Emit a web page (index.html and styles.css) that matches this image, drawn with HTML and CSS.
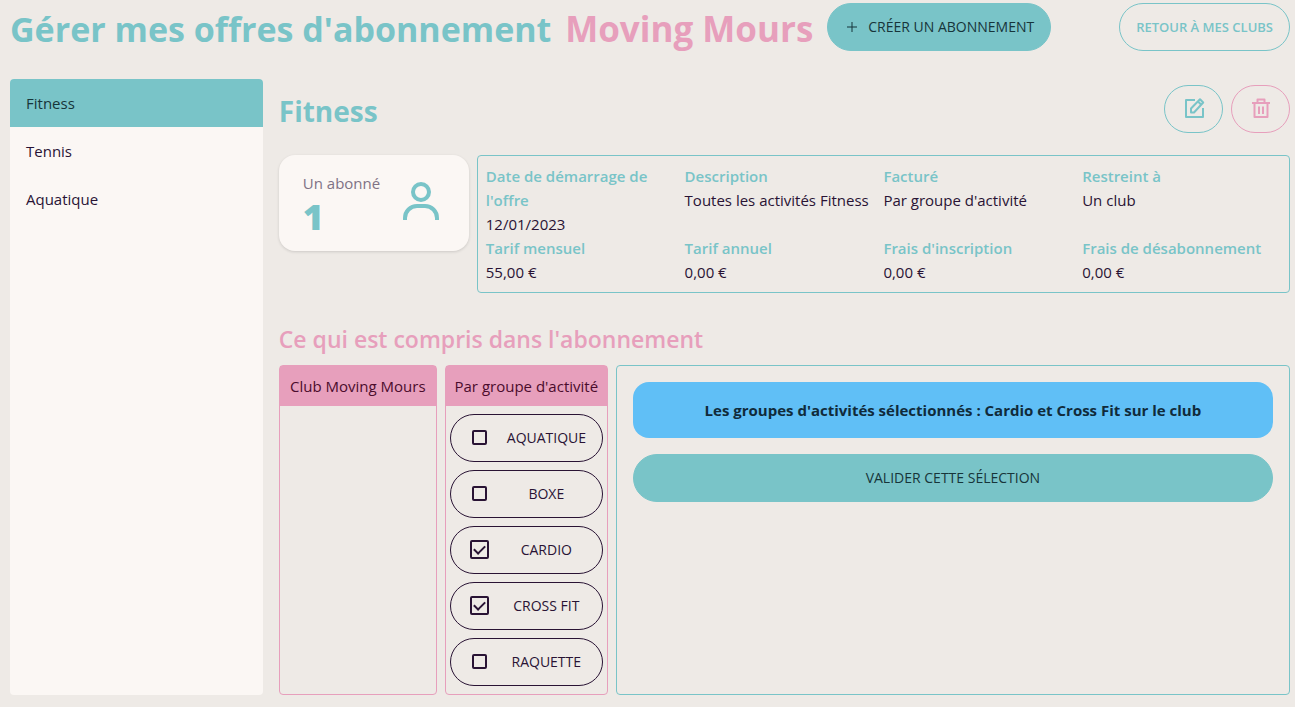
FILE: index.html
```html
<!DOCTYPE html>
<html lang="fr">
<head>
<meta charset="utf-8">
<meta name="viewport" content="width=device-width, initial-scale=1">
<title>Gérer mes offres d'abonnement</title>
<link rel="stylesheet" href="styles.css">
</head>
<body>
<header class="page-header">
  <h1 class="page-title">Gérer mes offres d'abonnement <span class="club-name">Moving Mours</span></h1>
  <button type="button" class="btn btn-primary">
    <svg class="plus-icon" viewBox="0 0 12 12" aria-hidden="true"><path d="M6 1v10M1 6h10"/></svg>
    Créer un abonnement
  </button>
  <a class="btn btn-outline back-link" href="#">Retour à mes clubs</a>
</header>
<main class="layout">
  <nav class="menu" aria-label="Abonnements">
    <a class="menu-item active" href="#" aria-current="page">Fitness</a>
    <a class="menu-item" href="#">Tennis</a>
    <a class="menu-item" href="#">Aquatique</a>
  </nav>
  <article class="offer">
    <div class="offer-header">
      <h2 class="offer-title">Fitness</h2>
      <div class="offer-actions">
        <button type="button" class="btn btn-outline btn-icon" aria-label="Modifier">
          <svg class="icon" viewBox="0 0 24 24" aria-hidden="true"><path d="M13 4H4v17h17V12"/><path d="M9 16.500v-4L18 3.300l3.200 3.200L12 16.500z"/><path d="M16 5.500l3 3"/></svg>
        </button>
        <button type="button" class="btn btn-outline btn-icon btn-danger" aria-label="Supprimer">
          <svg class="icon" viewBox="0 0 24 24" aria-hidden="true"><path d="M3 7h18M5.500 7v14h13V7M8.500 7V3.500h7V7M10 10.500v7.500M14 10.500v7.500"/></svg>
        </button>
      </div>
    </div>
    <div class="summary">
      <section class="stat">
        <div>
          <div class="stat-label">Un abonné</div>
          <div class="stat-value">1</div>
        </div>
        <svg class="stat-icon" viewBox="0 0 36 38" aria-hidden="true"><circle cx="18" cy="10" r="8"/><path d="M2 38v-2a12 12 0 0 1 12-12h8a12 12 0 0 1 12 12v2"/></svg>
      </section>
      <dl class="details">
        <div><dt>Date de démarrage de l'offre</dt><dd>12/01/2023</dd></div>
        <div><dt>Description</dt><dd>Toutes les activités Fitness</dd></div>
        <div><dt>Facturé</dt><dd>Par groupe d'activité</dd></div>
        <div><dt>Restreint à</dt><dd>Un club</dd></div>
        <div><dt>Tarif mensuel</dt><dd>55,00 €</dd></div>
        <div><dt>Tarif annuel</dt><dd>0,00 €</dd></div>
        <div><dt>Frais d'inscription</dt><dd>0,00 €</dd></div>
        <div><dt>Frais de désabonnement</dt><dd>0,00 €</dd></div>
      </dl>
    </div>
    <h3 class="section-title">Ce qui est compris dans l'abonnement</h3>
    <div class="panels">
      <section class="panel panel-club">
        <h4 class="panel-title">Club Moving Mours</h4>
      </section>
      <section class="panel panel-group">
        <h4 class="panel-title">Par groupe d'activité</h4>
        <div class="choices">
          <label class="choice"><input class="check" type="checkbox"><span class="choice-name">Aquatique</span></label>
          <label class="choice"><input class="check" type="checkbox"><span class="choice-name">Boxe</span></label>
          <label class="choice"><input class="check" type="checkbox" checked><span class="choice-name">Cardio</span></label>
          <label class="choice"><input class="check" type="checkbox" checked><span class="choice-name">Cross Fit</span></label>
          <label class="choice"><input class="check" type="checkbox"><span class="choice-name">Raquette</span></label>
        </div>
      </section>
      <section class="panel panel-result">
        <p class="notice">Les groupes d'activités sélectionnés : Cardio et Cross Fit sur le club</p>
        <button type="button" class="btn btn-primary btn-submit">Valider cette sélection</button>
      </section>
    </div>
  </article>
</main>
</body>
</html>
```
FILE: styles.css
```css
:root {
  --teal: #79c4c8;
  --pink: #e79fbc;
  --ink: #291334;
  --page: #eeeae6;
  --surface: #fbf7f4;
}
* { box-sizing: border-box; }
h1, h2, h3, h4, p, dl, dd { margin: 0; }
body {
  margin: 0;
  min-height: 100vh;
  padding: 3px 5px 12px 10px;
  display: flex;
  flex-direction: column;
  gap: 28px;
  background: var(--page);
  color: var(--ink);
  font: 400 15px/24px "Open Sans", "Noto Sans", sans-serif;
}
.page-header { display: flex; align-items: center; gap: 14px; }
.page-title { padding-top: 4px; color: var(--teal); font-size: 34px; line-height: 44px; font-weight: 700; }
.club-name { color: var(--pink); margin-left: 5px; font-size: 35px; }
.btn {
  display: inline-flex;
  align-items: center;
  justify-content: center;
  gap: 10px;
  height: 48px;
  padding: 0 16px;
  border: 1px solid var(--teal);
  border-radius: 24px;
  font: 500 14px/16px "Open Sans", "Noto Sans", sans-serif;
  text-transform: uppercase;
  text-decoration: none;
  white-space: nowrap;
  cursor: pointer;
}
.btn-primary { background: var(--teal); color: #17353a; }
.btn-outline { background: transparent; color: var(--teal); }
.btn-danger { border-color: var(--pink); color: var(--pink); }
.btn-icon { width: 59px; padding: 0 0 2px; }
.back-link { margin-left: auto; font-size: 13px; font-weight: 600; }
.plus-icon { width: 12px; height: 12px; margin-left: 2px; fill: none; stroke: currentColor; }
.icon { width: 24px; height: 24px; fill: none; stroke: currentColor; stroke-width: 2; stroke-linejoin: round; }
.layout { flex: 1; display: grid; grid-template-columns: 1fr 4fr; gap: 16px; }
.menu { background: var(--surface); border-radius: 4px; overflow: hidden; }
.menu-item { display: block; padding: 12px 16px; color: var(--ink); text-decoration: none; }
.menu-item.active { background: var(--teal); color: #17353a; }
.offer { display: flex; flex-direction: column; min-width: 0; }
.offer-header { display: flex; justify-content: space-between; align-items: center; padding: 6px 0 22px; }
.offer-title { padding-top: 4px; color: var(--teal); font-size: 28px; line-height: 36px; font-weight: 700; }
.offer-actions { display: flex; gap: 8px; }
.summary { display: flex; align-items: flex-start; gap: 8px; }
.stat {
  display: flex;
  align-items: center;
  justify-content: space-between;
  width: 190px;
  height: 96px;
  padding: 16px 30px 12px 24px;
  background: var(--surface);
  border-radius: 16px;
  box-shadow: 0 1px 3px rgba(0, 0, 0, .14);
}
.stat-label { color: #7f7285; }
.stat-value { color: var(--teal); font-size: 36px; line-height: 44px; font-weight: 800; }
.stat-icon { width: 36px; height: 38px; margin-bottom: 8px; fill: none; stroke: var(--teal); stroke-width: 4; }
.details {
  flex: 1;
  display: grid;
  grid-template-columns: repeat(4, 1fr);
  padding: 8px;
  border: 1px solid var(--teal);
  border-radius: 4px;
}
.details dt { color: var(--teal); font-weight: 600; }
.section-title { margin: 30px 0 10px; color: var(--pink); font-size: 23px; line-height: 32px; font-weight: 600; }
.panels { flex: 1; display: flex; gap: 8px; }
.panel { border: 1px solid var(--pink); border-radius: 4px; }
.panel-club { width: 158px; }
.panel-group { width: 163px; }
.panel-title { padding: 8px 0; background: var(--pink); color: #4b0c2c; font-size: 15px; font-weight: 400; text-align: center; white-space: nowrap; }
.choices { display: flex; flex-direction: column; gap: 8px; padding: 8px 4px; }
.choice {
  display: flex;
  align-items: center;
  height: 48px;
  padding: 0 16px 0 17px;
  border: 1px solid var(--ink);
  border-radius: 24px;
  font-size: 14px;
  font-weight: 500;
  text-transform: uppercase;
  cursor: pointer;
}
.choice-name { flex: 1; margin-left: 16px; text-align: center; white-space: nowrap; }
.check {
  appearance: none;
  display: grid;
  place-items: center;
  flex: none;
  width: 15px;
  height: 15px;
  margin: 0 4px 2px;
  border: 2px solid var(--ink);
  border-radius: 2px;
}
.check:checked { width: 19px; height: 19px; margin: 0 2px 2px; }
.check:checked::before {
  content: "";
  width: 9px;
  height: 5px;
  margin-bottom: 2px;
  border: solid var(--ink);
  border-width: 0 0 2px 2px;
  rotate: -45deg;
}
.panel-result { flex: 1; display: flex; flex-direction: column; gap: 16px; padding: 16px; border-color: var(--teal); }
.notice { padding: 16px; border-radius: 16px; background: #60bff6; color: #102b3b; font-weight: 700; text-align: center; }
.btn-submit { font-weight: 400; }
```
